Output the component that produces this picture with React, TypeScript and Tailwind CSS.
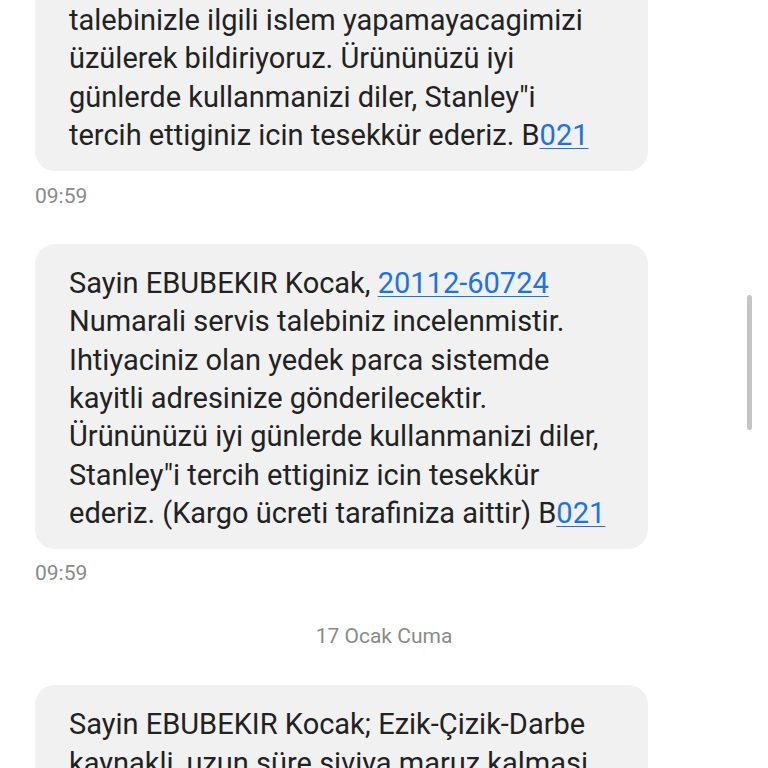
import React from 'react';

const font = { fontFamily: 'Roboto, "Noto Sans", sans-serif' };

function Link({ children }: { children: React.ReactNode }) {
    return <span className="text-[#1a73e8] underline decoration-1 underline-offset-[3px]">{children}</span>;
}

function Bubble({ lines, className = '' }: { lines: React.ReactNode[]; className?: string }) {
    return (
        <div className={`mx-[35px] w-[613px] bg-[#f1f1f1] rounded-[20px] pl-[34px] pr-4 text-[29px] leading-[38.3px] text-[#222] ${className}`}>
            {lines.map((l, i) => (
                <div key={i} className="whitespace-nowrap">{l}</div>
            ))}
        </div>
    );
}

function Time() {
    return <div className="ml-[35px] text-[21px] leading-[24px] text-[#8a8a8a]">09:59</div>;
}

export default function App() {
    return (
        <div className="relative h-[768px] w-[768px] overflow-hidden bg-white" style={font}>
            <div className="flex flex-col">
                <Bubble
                    className="rounded-t-none pt-[1px] pb-[17px]"
                    lines={[
                        'talebinizle ilgili islem yapamayacagimizi',
                        'üzülerek bildiriyoruz. Ürününüzü iyi',
                        'günlerde kullanmanizi diler, Stanley"i',
                        <>tercih ettiginiz icin tesekkür ederiz. B<Link>021</Link></>,
                    ]}
                />
                <div className="mt-[13px]">
                    <Time />
                </div>
                <Bubble
                    className="mt-[36px] pt-[20px] pb-[17px]"
                    lines={[
                        <>Sayin EBUBEKIR Kocak, <Link>20112-60724</Link></>,
                        'Numarali servis talebiniz incelenmistir.',
                        'Ihtiyaciniz olan yedek parca sistemde',
                        'kayitli adresinize gönderilecektir.',
                        'Ürününüzü iyi günlerde kullanmanizi diler,',
                        'Stanley"i tercih ettiginiz icin tesekkür',
                        <>ederiz. (Kargo ücreti tarafiniza aittir) B<Link>021</Link></>,
                    ]}
                />
                <div className="mt-[12px]">
                    <Time />
                </div>
                <div className="mt-[39px] text-center text-[21px] leading-[24px] text-[#8a8a8a]">17 Ocak Cuma</div>
                <Bubble
                    className="mt-[37px] pt-[20px] pb-[17px]"
                    lines={['Sayin EBUBEKIR Kocak; Ezik-Çizik-Darbe', 'kaynakli, uzun süre siviya maruz kalmasi']}
                />
            </div>
            <div className="absolute right-[16px] top-[295px] h-[135px] w-[5px] rounded-full bg-[#c4c4c4]" />
        </div>
    );
}
